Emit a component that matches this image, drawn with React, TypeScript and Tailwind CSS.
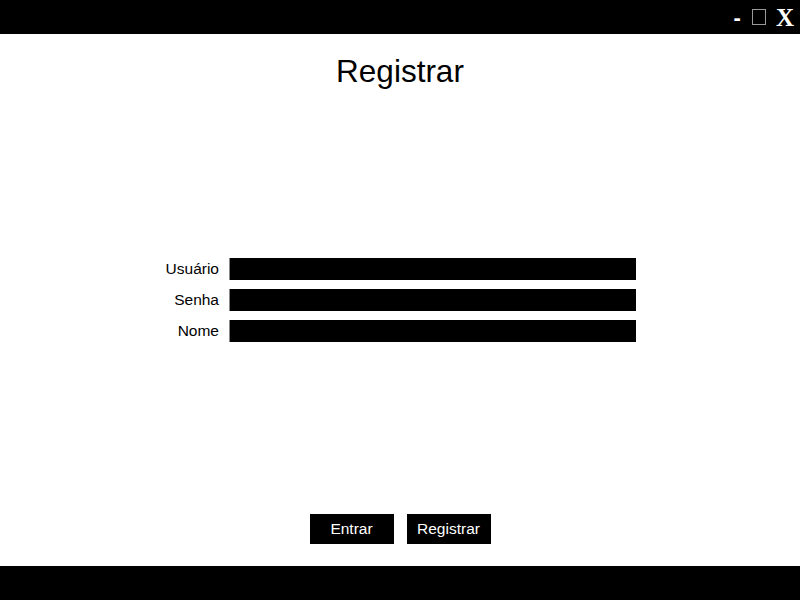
export default function App() {
  const fields = ["Usuário", "Senha", "Nome"];

  return (
    <div className="flex h-[600px] w-[800px] flex-col bg-white font-['Liberation_Sans',Arial,sans-serif] text-black">
      {/* Title bar */}
      <div className="flex h-[34px] items-center justify-end bg-black pr-[6px]">
        <span className="mr-[11px] mt-[1px] text-[22px] font-bold leading-none text-white">-</span>
        <span className="mr-[10px] h-[16px] w-[14px] border border-[#9a9a9a]" />
        <span className="font-['Liberation_Serif',serif] text-[25px] font-bold leading-none text-white">X</span>
      </div>

      {/* Content */}
      <div className="flex flex-1 flex-col items-center">
        <h1 className="mt-[17px] text-[31.5px] leading-[40px]">Registrar</h1>

        <div className="mt-[167px] flex flex-col gap-[9px]">
          {fields.map((f) => (
            <div key={f} className="flex items-center">
              <label className="w-[65px] pr-[10px] text-right text-[15.5px] leading-none">{f}</label>
              <div className="h-[22px] w-[407px] border-l border-[#888] bg-black" />
            </div>
          ))}
        </div>

        <div className="mt-auto mb-[22px] flex gap-[13px]">
          <button className="h-[30px] w-[84px] bg-black text-[15.5px] text-white">Entrar</button>
          <button className="h-[30px] w-[84px] bg-black text-[15.5px] text-white">Registrar</button>
        </div>
      </div>

      {/* Footer bar */}
      <div className="h-[34px] bg-black" />
    </div>
  );
}
